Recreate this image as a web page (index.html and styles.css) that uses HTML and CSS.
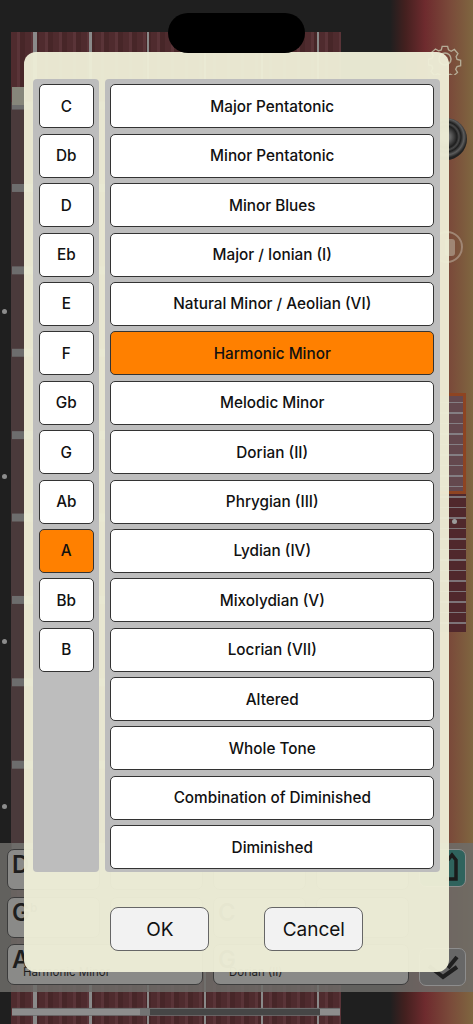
FILE: index.html
```html
<!DOCTYPE html>
<html lang="en">
<head>
<meta charset="utf-8">
<title>Scale picker</title>
<link rel="stylesheet" href="styles.css">
</head>
<body>
<div class="stage">
  <div class="top-spacer"></div>
  <div class="neck"></div>
  <span class="dot dot1"></span><span class="dot dot2"></span><span class="dot dot3"></span><span class="dot dot4"></span>
  <svg class="gear" viewBox="0 0 32 32" width="34" height="32"><path d="M13 2h6l1 4 3 1.500 3.500-2 4 4.500-2 3.500 1 3 4 1v6l-4 1-1.500 3 2 3.500-4.500 4-3.500-2-3 1-1 4h-6l-1-4-3-1.500-3.500 2-4-4.500 2-3.500-1-3-4-1v-6l4-1 1.500-3-2-3.500 4.500-4 3.500 2 3-1z" transform="translate(1.500 1.500) scale(.9)"/><circle cx="16" cy="16" r="6"/></svg>
  <div class="knob"></div>
  <div class="rec"></div>
  <div class="mini"><div class="mini-window"></div><span class="mini-dot"></span></div>
  <div class="dock">
    <div class="dock-row">
      <div class="chip">D</div><div class="chip"></div><div class="chip"></div><div class="chip"></div>
      <div class="side teal"><svg viewBox="0 0 47 38" width="47" height="38"><path d="M29 11l4-5 4 5v19H27"/></svg></div>
    </div>
    <div class="dock-row">
      <div class="chip">G<sup>b</sup></div><div class="chip"></div><div class="chip">C</div><div class="chip"></div>
      <div class="side blank"></div>
    </div>
    <div class="dock-row">
      <div class="chip wide">A<small>Harmonic Minor</small></div><div class="chip wide">G<small>Dorian (II)</small></div>
      <div class="side check"><svg viewBox="0 0 47 38" width="47" height="38"><path d="M10 18l14 11 14-10M29 20l9-11"/></svg></div>
    </div>
  </div>
  <div class="tail"></div>
</div>
<div class="island"></div>
<main class="modal">
  <div class="columns">
    <div class="panel keys">
      <button class="opt">C</button><button class="opt">Db</button><button class="opt">D</button><button class="opt">Eb</button>
      <button class="opt">E</button><button class="opt">F</button><button class="opt">Gb</button><button class="opt">G</button>
      <button class="opt">Ab</button><button class="opt on">A</button><button class="opt">Bb</button><button class="opt">B</button>
    </div>
    <div class="panel scales">
      <button class="opt">Major Pentatonic</button>
      <button class="opt">Minor Pentatonic</button>
      <button class="opt">Minor Blues</button>
      <button class="opt">Major / Ionian (I)</button>
      <button class="opt">Natural Minor / Aeolian (VI)</button>
      <button class="opt on">Harmonic Minor</button>
      <button class="opt">Melodic Minor</button>
      <button class="opt">Dorian (II)</button>
      <button class="opt">Phrygian (III)</button>
      <button class="opt">Lydian (IV)</button>
      <button class="opt">Mixolydian (V)</button>
      <button class="opt">Locrian (VII)</button>
      <button class="opt">Altered</button>
      <button class="opt">Whole Tone</button>
      <button class="opt">Combination of Diminished</button>
      <button class="opt">Diminished</button>
    </div>
  </div>
  <div class="actions">
    <button class="act">OK</button>
    <button class="act">Cancel</button>
  </div>
</main>
</body>
</html>
```
FILE: styles.css
```css
* { box-sizing: border-box; }
html, body { margin: 0; height: 100%; }
body {
  width: 473px; height: 1024px; overflow: hidden; position: relative;
  font-family: Inter, "Liberation Sans", sans-serif; color: #111;
  background: #1f1f1f;
}
.stage {
  height: 1024px; display: flex; flex-direction: column;
  background: linear-gradient(90deg, #1f1f1f 0, #1f1f1f 390px, #43201f 405px, #6e2b2e 425px, #7a4a3a 450px, #7f6640 473px);
}
.top-spacer { height: 32px; flex: none; }
.neck {
  flex: 1; width: 330px; margin-left: 11px;
  background:
    linear-gradient(#86867a 0 0) 1px 55px / 13px 18px no-repeat,
    linear-gradient(#6d6d6d 0 8px, transparent 8px) 1px 152px / 328px 82.400px repeat-y,
    linear-gradient(90deg, #4a3a3b 0 13px, transparent 13px) 0 70px / 13px 780px no-repeat,
    linear-gradient(90deg, transparent 0 22px, #8a8a8a 22px 26px, transparent 26px 78px, #8a8a8a 78px 81px, transparent 81px 136px, #8a8a8a 136px 137.500px, transparent 137.500px 193px, #8a8a8a 193px 194.500px, transparent 194.500px 250px, #8a8a8a 250px 251.500px, transparent 251.500px 306px, #8a8a8a 306px 307.500px, transparent 307.500px),
    repeating-linear-gradient(90deg, #4f2b2e 0 6px, #5a3438 6px 9px, #472628 9px 14px);
}
.dot { position: absolute; left: 2px; width: 5px; height: 5px; border-radius: 50%; background: #8c8c8c; }
.dot1 { top: 309px; } .dot2 { top: 474px; } .dot3 { top: 639px; } .dot4 { top: 804px; }
.gear { position: absolute; left: 428px; top: 43px; fill: none; stroke: #b5ac96; stroke-width: 1.500; }
.knob {
  position: absolute; left: 425px; top: 118px; width: 42px; height: 42px; border-radius: 50%;
  background: radial-gradient(circle at 50% 45%, #6a6a6a 0 4px, #1e1e1e 11px, #4a4a4a 13px, #1e1e1e 15px, #5c5c5c 18px, #222 21px);
}
.rec { position: absolute; left: 431px; top: 231px; width: 32px; height: 32px; border-radius: 50%; border: 2px solid #a08674; }
.rec::after { content: ""; position: absolute; left: 12px; top: 6px; width: 10px; height: 17px; border-radius: 3px; background: #9f8674; }
.mini {
  position: absolute; left: 436px; top: 393px; width: 30px; height: 239px;
  background:
    repeating-linear-gradient(180deg, transparent 0 9px, #7d7478 9px 10.500px),
    #50282c;
}
.mini-window { height: 101px; border: 3px solid #8e4422; background: rgba(150,150,160,.3); }
.mini-dot { position: absolute; right: 9px; top: 126px; width: 5px; height: 5px; border-radius: 50%; background: #9b9b9b; }
.dock {
  position: absolute; left: 0; right: 0; top: 843px; height: 149px; padding: 6px 7px 0;
  display: flex; flex-direction: column; gap: 6.500px; background: rgba(110,108,105,.86);
}
.dock-row { display: flex; gap: 10px; height: 41px; }
.chip {
  flex: 1; border: 1px solid #3c3c3c; border-radius: 7px; background: #8a8a88;
  font-size: 24px; font-weight: 600; padding: 5px 4px; line-height: 20px; position: relative; color: #1e1e1e;
}
.chip sup { font-size: 12px; line-height: 0; }
.chip small { position: absolute; left: 15px; right: 0; bottom: 6px; font-size: 11.500px; font-weight: 400; line-height: 12px; }
.side { flex: none; width: 47px; height: 38px; border-radius: 7px; border: 1px solid #8d8d8d; }
.teal { background: #2f635d; }
.teal svg { display: block; margin: -1px; fill: none; stroke: #1b1b1b; stroke-width: 3.500; }
.blank { border-color: transparent; }
.check { background: #676767; margin-top: 4px; }
.check svg { display: block; margin: -1px; fill: none; stroke: #1f1f1f; stroke-width: 4; }
.tail {
  position: absolute; left: 12px; top: 1009px; width: 328px; height: 6px;
  background: linear-gradient(90deg, #8d8d8d 0 128px, #737373 128px 138px, #464646 138px 308px, #8d8d8d 308px);
}
.island { position: absolute; left: 168px; top: 13px; width: 137px; height: 40px; border-radius: 20px; background: #000; z-index: 2; }
.modal {
  position: absolute; left: 24px; top: 52px; width: 425px; height: 920px; z-index: 1;
  padding: 27px 9.300px 0; border-radius: 12px; background: rgba(238,238,215,.96);
  display: flex; flex-direction: column;
}
.columns { display: flex; gap: 5.500px; height: 793px; flex: none; }
.panel {
  background: #bdbdbd; border-radius: 4px; padding: 5.400px 5.500px 0;
  display: flex; flex-direction: column; gap: 5.400px;
}
.keys { width: 66px; flex: none; }
.scales { flex: 1; }
.opt {
  height: 44px; flex: none; width: 100%; padding: 0; margin: 0;
  background: #fff; border: 1.500px solid #333; border-radius: 5px;
  font: 550 15.300px Inter, "Liberation Sans", sans-serif; color: #111;
}
.opt.on { background: #ff8000; }
.actions { display: flex; gap: 55px; padding: 35px 0 0 77px; }
.act {
  width: 99px; height: 44px; padding: 0; border: 1.500px solid #666; border-radius: 8px;
  background: #f2f2f2; font: 400 19px Inter, "Liberation Sans", sans-serif; color: #111;
}
```
